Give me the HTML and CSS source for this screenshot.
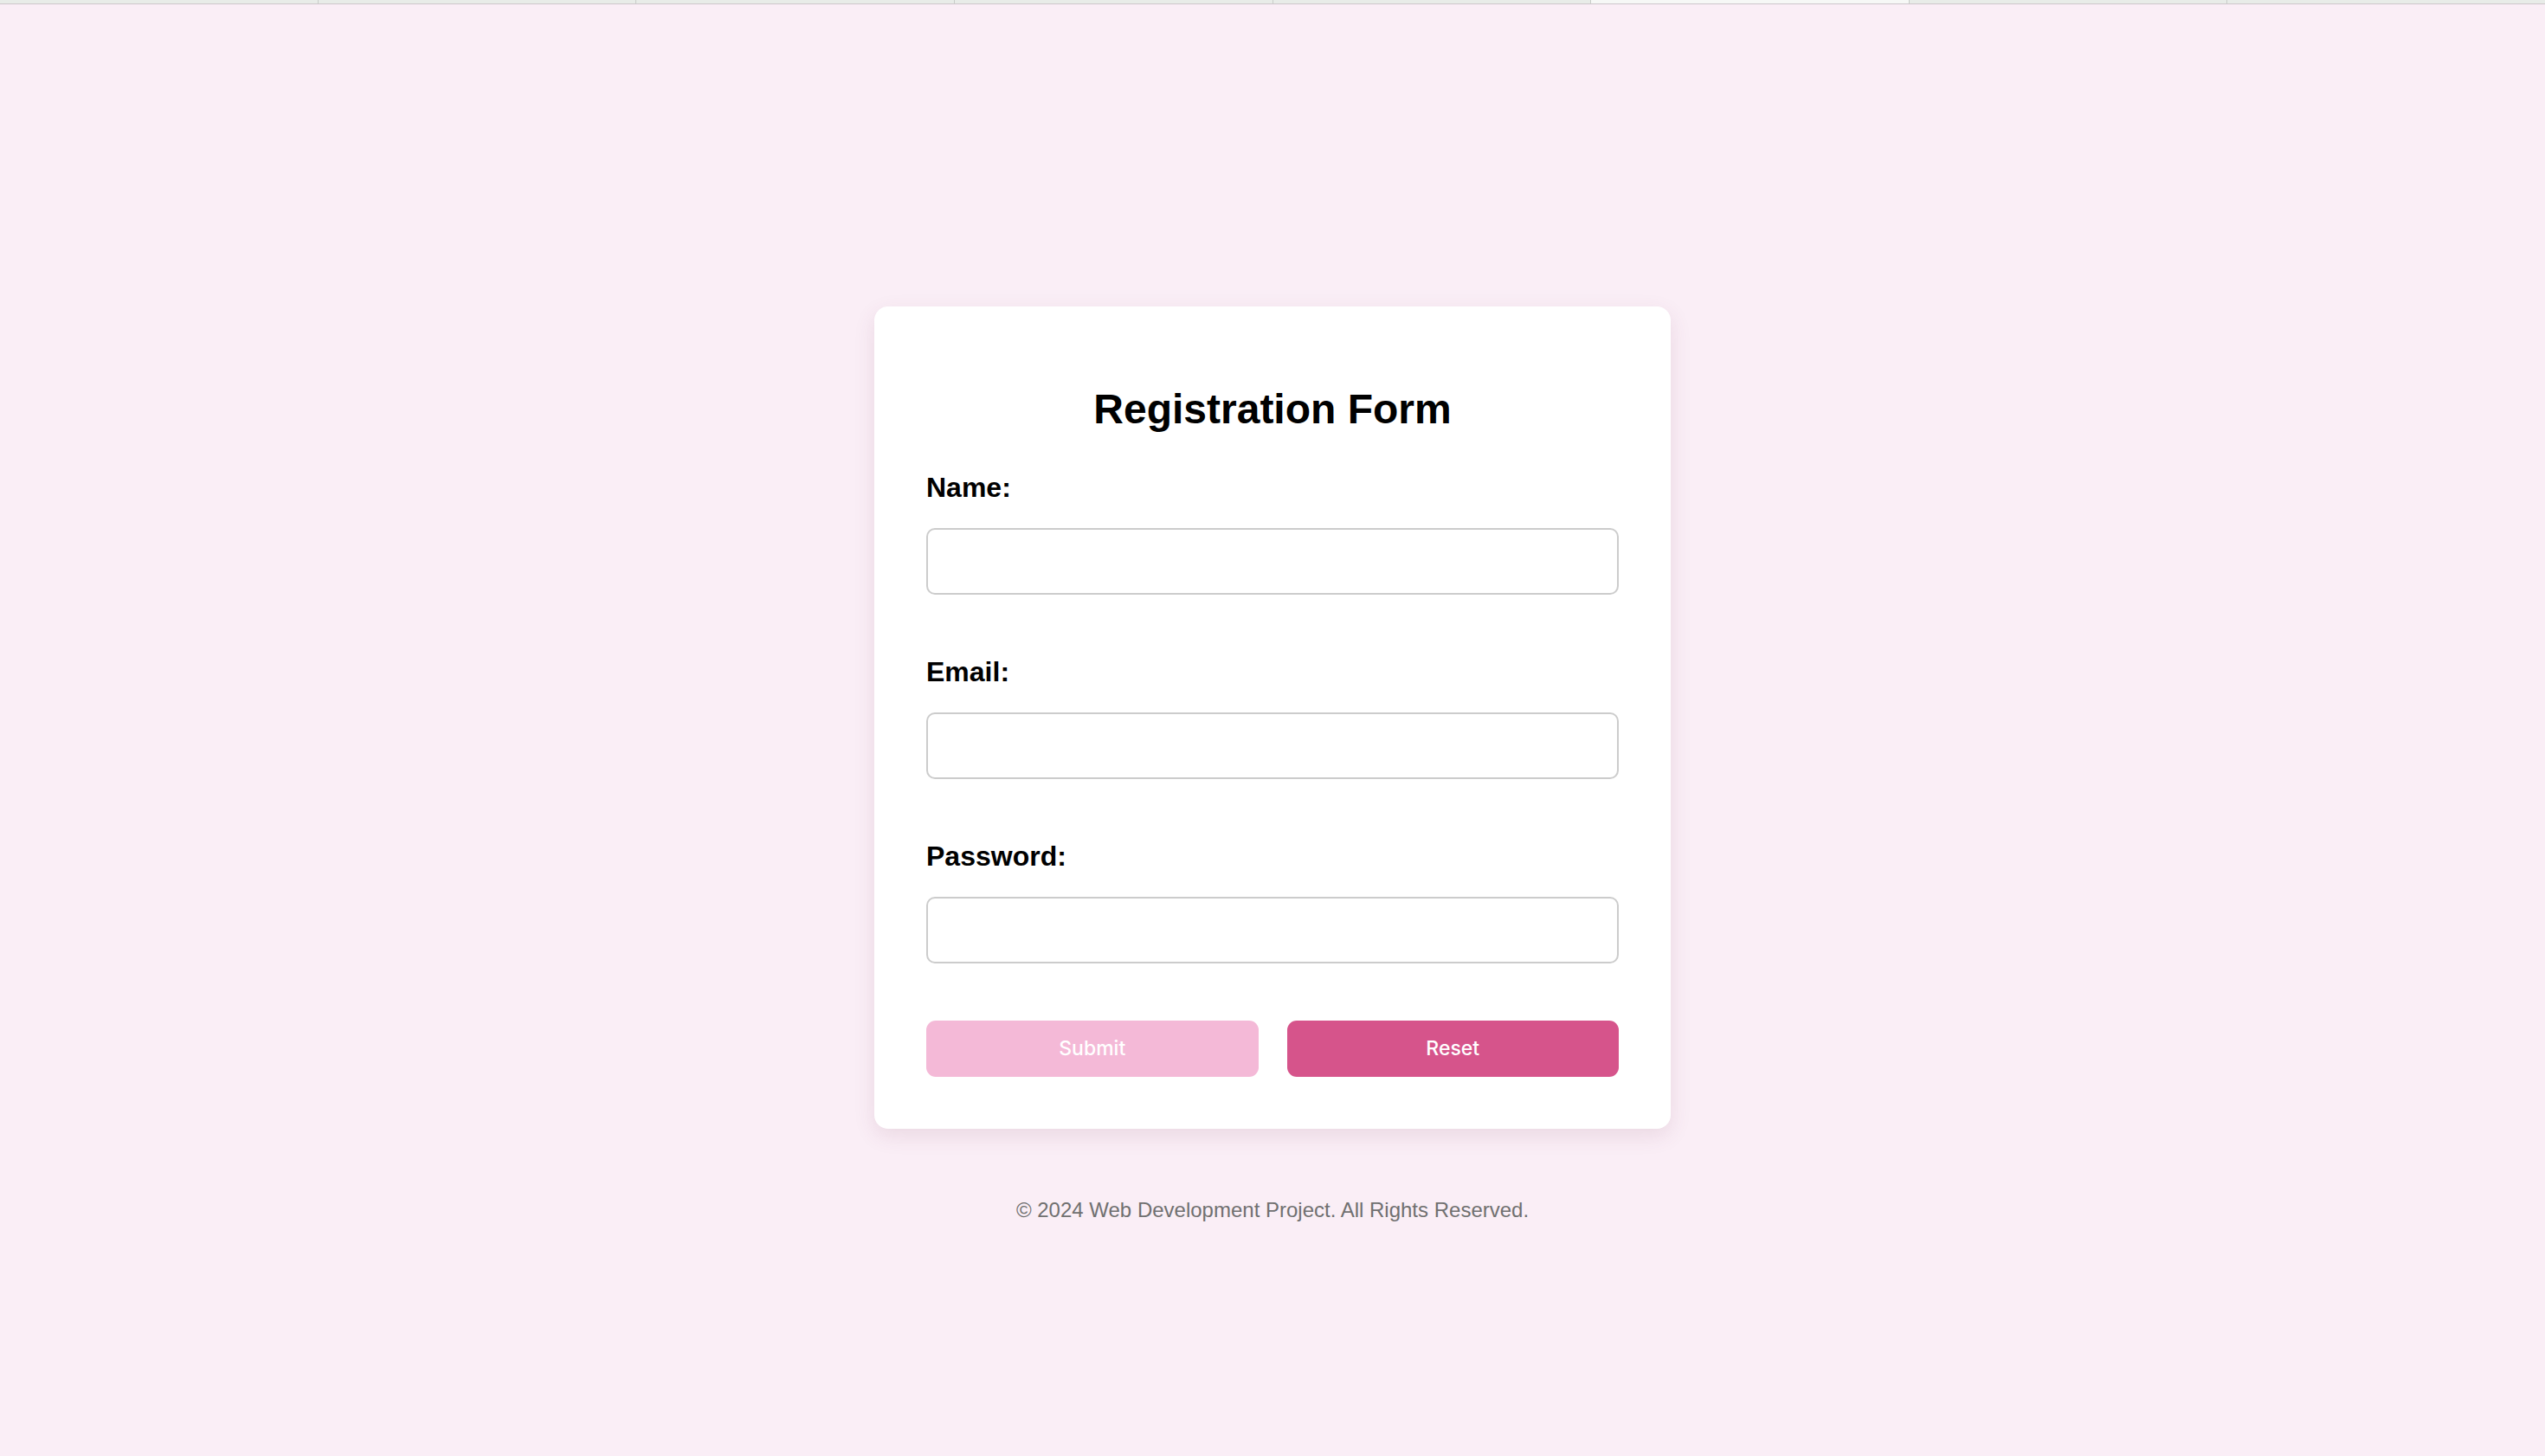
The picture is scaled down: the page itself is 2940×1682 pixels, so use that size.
FILE: index.html
```html
<!DOCTYPE html>
<html lang="en">
<head>
<meta charset="utf-8">
<title>Registration Form</title>
<link rel="stylesheet" href="styles.css">
</head>
<body>
<div class="tabs">
  <div class="tab"></div><div class="tab"></div><div class="tab"></div><div class="tab"></div>
  <div class="tab"></div><div class="tab active"></div><div class="tab"></div><div class="tab"></div>
</div>
<main class="page">
  <form class="card">
    <h2 class="title">Registration Form</h2>
    <div class="field">
      <label class="label" for="name">Name:</label>
      <input class="input" id="name" type="text">
    </div>
    <div class="field">
      <label class="label" for="email">Email:</label>
      <input class="input" id="email" type="email">
    </div>
    <div class="field">
      <label class="label" for="password">Password:</label>
      <input class="input" id="password" type="password">
    </div>
    <div class="actions">
      <button class="btn btn-submit" type="submit">Submit</button>
      <button class="btn btn-reset" type="reset">Reset</button>
    </div>
  </form>
  <footer class="footer">© 2024 Web Development Project. All Rights Reserved.</footer>
</main>
</body>
</html>
```
FILE: styles.css
```css
* { box-sizing: border-box; }
html, body { margin: 0; padding: 0; }
body {
  background: #faeef6;
  font-family: "Liberation Sans", Arial, sans-serif;
  min-height: 100vh;
}
.tabs {
  display: flex;
  height: 5px;
  background: #e8ece8;
  border-bottom: 1px solid #cdc6ca;
}
.tab {
  flex: 1;
  border-right: 1px solid #c9cdc9;
}
.tab:last-child { border-right: none; }
.tab.active { background: #f6f8f6; }
.page {
  display: flex;
  flex-direction: column;
  align-items: center;
  padding-top: 349px;
}
.card {
  width: 920px;
  background: #ffffff;
  border-radius: 16px;
  padding: 60px 60px 60px;
  box-shadow: 0 8px 24px rgba(120, 60, 90, 0.12);
  display: flex;
  flex-direction: column;
}
.title {
  margin: 31px 0 45px;
  text-align: center;
  font-size: 48px;
  font-weight: 700;
  color: #000;
  line-height: 1.15;
}
.field {
  display: flex;
  flex-direction: column;
  margin-bottom: 71px;
}
.field:nth-of-type(3) { margin-bottom: 66px; }
.label {
  font-size: 32px;
  font-weight: 700;
  color: #000;
  line-height: 1.15;
  margin-bottom: 28px;
}
.input {
  width: 100%;
  height: 77px;
  border: 2px solid #cccccc;
  border-radius: 10px;
  background: #fff;
  font-size: 32px;
  padding: 0 20px;
  font-family: "Liberation Sans", Arial, sans-serif;
}
.actions {
  display: flex;
  gap: 33px;
}
.btn {
  flex: 1;
  height: 65px;
  border: none;
  border-radius: 11px;
  color: #ffffff;
  font-family: Inter, "Noto Sans", sans-serif;
  font-size: 23px;
  font-weight: 500;
}
.btn-submit { background: #f4b9d7; }
.btn-reset { background: #d6548b; }
.footer {
  margin-top: 80px;
  font-size: 24px;
  line-height: 1.15;
  color: #707070;
}
```
